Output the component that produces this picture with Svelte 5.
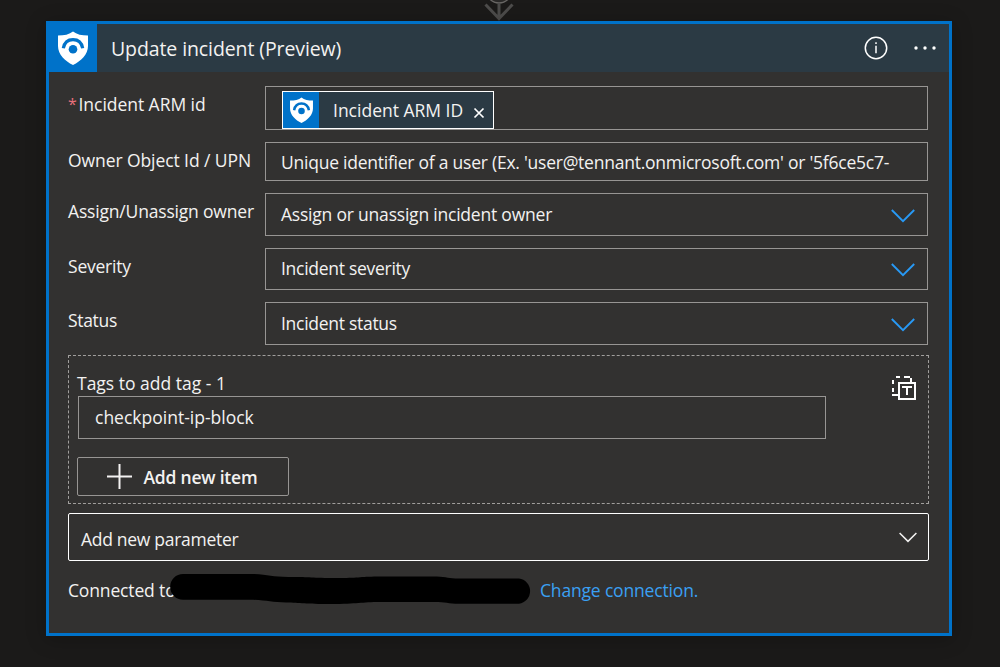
<script>
  const selects = [
    { label: 'Assign/Unassign owner', value: 'Assign or unassign incident owner', height: 43, gap: 12, ls: [-0.18, -0.21] },
    { label: 'Severity', value: 'Incident severity', height: 42, gap: 12, ls: [-0.22, -0.28] },
    { label: 'Status', value: 'Incident status', height: 43, gap: 10, ls: [-0.32, -0.28] }
  ];
</script>

{#snippet shield(w, h)}
  <svg width={w} height={h} viewBox="0 0 30 34">
    <path fill="#fff" d="M15 0.5C18.5 3.4 24 4.6 30 4.6V15C30 23.5 23 30 15 34C7 30 0 23.5 0 15V4.6C6 4.6 11.5 3.4 15 0.5Z" />
    <path fill="none" stroke="#0072c9" stroke-width="3.2" d="M5.3 17.2C6.5 11 10.3 8.6 15 8.6S23.500 11 24.700 17.200" />
    <circle cx="15" cy="18.300" r="4.300" fill="#0072c9" />
  </svg>
{/snippet}

<div class="canvas">
  <svg class="arrow" width="32" height="21" viewBox="0 0 32 21">
    <circle cx="16" cy="-10" r="13" fill="#292827" stroke="#686664" stroke-width="1.300" />
    <path d="M16 3V19M2.500 4.500L16 18.500L29.500 4.500" fill="none" stroke="#4d4c4b" stroke-width="3" />
  </svg>

  <section class="card">
    <header>
      <div class="logo">{@render shield(30, 34)}</div>
      <h1>Update incident (Preview)</h1>
      <svg class="info" width="24" height="24" viewBox="0 0 24 24">
        <circle cx="12" cy="12" r="10.700" fill="none" stroke="#fff" stroke-width="1.500" />
        <path d="M12 9.700V17.300M12 6.200V8" stroke="#fff" stroke-width="1.500" />
      </svg>
      <svg class="more" width="24" height="6" viewBox="0 0 24 6" fill="#fff">
        <circle cx="3" cy="3" r="1.700" /><circle cx="12" cy="3" r="1.700" /><circle cx="21" cy="3" r="1.700" />
      </svg>
    </header>

    <div class="body">
      <div class="row first">
        <div class="label req"><span class="star">*</span><span class="t-arm">Incident ARM id</span></div>
        <div class="field token-field">
          <div class="token">
            <div class="token-logo">{@render shield(23, 26)}</div>
            <span class="t-token">Incident ARM ID</span>
            <svg class="close" width="12" height="12" viewBox="0 0 12 12"><path d="M1.500 1.500L10.500 10.500M10.500 1.500L1.500 10.500" stroke="#fff" stroke-width="1.700" /></svg>
          </div>
        </div>
      </div>
      <div class="row second">
        <div class="label t-owner">Owner Object Id / UPN</div>
        <div class="field"><span class="t-unique">Unique identifier of a user (Ex. 'user@tennant.onmicrosoft.com' or '5f6ce5c7-</span></div>
      </div>
      {#each selects as s}
        <div class="row" style="height:{s.height}px;margin-bottom:{s.gap}px">
          <div class="label" style="letter-spacing:{s.ls[0]}px">{s.label}</div>
          <div class="field select">
            <span style="letter-spacing:{s.ls[1]}px">{s.value}</span>
            <svg class="chev" width="24" height="14" viewBox="0 0 24 14"><path d="M0.800 1L12 12.200L23.200 1" fill="none" stroke="#2899f5" stroke-width="1.900" /></svg>
          </div>
        </div>
      {/each}

      <div class="tags">
        <div class="tags-head">
          <span class="t-tags">Tags to add tag - 1</span>
          <svg width="24" height="24" viewBox="0 0 24 24" fill="none" stroke="#fff" stroke-width="2">
            <path d="M4 1H8M12 1H18M19 2V6M1 4V8M1 12V16M1 18V20M2 19H6" />
            <rect x="7" y="7" width="16" height="16" />
            <path d="M10 11H20M15 11V19" />
          </svg>
        </div>
        <div class="tag-input"><span class="t-check">checkpoint-ip-block</span></div>
        <button class="add">
          <svg width="25" height="25" viewBox="0 0 25 25"><path d="M0 12.500H25M12.500 0V25" stroke="#f3f2f1" stroke-width="2" /></svg>
          <span class="t-add">Add new item</span>
        </button>
      </div>

      <div class="param">
        <span class="t-param">Add new parameter</span>
        <svg width="18" height="11" viewBox="0 0 18 11"><path d="M0.600 1L9 9.400L17.400 1" fill="none" stroke="#f3f2f1" stroke-width="1.500" /></svg>
      </div>

      <footer>
        <span class="t-conn">Connected to</span>
        <svg class="mask" width="362" height="31" viewBox="0 0 361 31" preserveAspectRatio="none">
          <path d="M13 0H83C98 0.500 102 3 118 3C138 2.500 140 4 170 4C188 4 191 2.500 210 2.500H266C276 3 278 4.500 288 4.500H348A12.700 12.700 0 0 1 348 29.700H288C278 29.700 274 28 264 28H210C190 28 188 30 160 30C135 30 130 29 116 28.500C101 28.500 96 26 80 25.700H13A12.800 12.800 0 0 1 13 0Z" />
        </svg>
        <a class="t-change" href="#top">Change connection.</a>
      </footer>
    </div>
  </section>
</div>

<style>
  :global(body) { background: #1b1a19; overflow: hidden; }
  .canvas {
    position: relative;
    box-sizing: border-box;
    width: 1000px;
    height: 667px;
    padding: 21px 48px 0 46px;
    overflow: hidden;
    background: #1b1a19;
    color: #f3f2f1;
    font-family: "Open Sans", "Noto Sans", sans-serif;
    font-size: 17.500px;
    line-height: 24px;
    white-space: nowrap;
  }
  svg { display: block; flex: none; }
  .arrow { position: absolute; left: 483px; top: 0; }
  .card {
    position: relative;
    box-sizing: border-box;
    width: 906px;
    height: 615px;
    border: 3px solid #0072c9;
    background: #323130;
    box-shadow: 0 3px 18px rgba(0, 0, 0, 0.25);
  }
  header { display: flex; align-items: center; height: 48px; background: #2b3a44; }
  .logo { display: flex; align-items: center; justify-content: center; width: 48px; height: 48px; background: #0072c9; }
  h1 { flex: 1; margin: 2px 0 0 14px; font-size: 19.500px; font-weight: 400; letter-spacing: -0.100px; }
  .info { margin: 0 25px 1px 0; }
  .more { margin-right: 12px; }
  .body { padding: 14px 20px 0 19px; }
  .row { display: flex; width: 860px; }
  .first { height: 44px; margin-bottom: 12px; }
  .second { height: 39px; margin-bottom: 12px; }
  .label { width: 197px; flex: none; padding-top: 6px; box-sizing: border-box; }
  .req { display: flex; }
  .star { width: 10.500px; color: #e8707b; font-size: 16px; }
  .t-arm { letter-spacing: -0.040px; }
  .t-owner { letter-spacing: -0.080px; }
  .t-unique { letter-spacing: -0.240px; }
  .t-add { letter-spacing: -0.220px; }
  .t-param { letter-spacing: -0.290px; }
  .t-change { letter-spacing: -0.170px; }
  .field {
    flex: 1;
    box-sizing: border-box;
    display: flex;
    align-items: center;
    justify-content: space-between;
    border: 1px solid #979593;
    padding: 0 12px 0 15px;
    min-width: 0;
  }
  .select span { margin-bottom: 2px; }
  .chev { margin-top: 2px; }
  .token-field { padding: 0 0 0 16px; }
  .token {
    box-sizing: border-box;
    display: flex;
    align-items: center;
    width: 212px;
    height: 38px;
    margin-top: 4px;
    border: 1px solid #fff;
    background: #2b3a44;
  }
  .token-logo { display: flex; align-items: center; justify-content: center; width: 36px; height: 36px; background: #0072c9; }
  .token span { width: 140px; margin-left: 14px; }
  .close { margin-top: 6px; }
  .tags {
    box-sizing: border-box;
    width: 861px;
    height: 149px;
    border: 1px dashed #a19f9d;
    padding: 15px 12px 0 8px;
  }
  .tags-head { display: flex; justify-content: space-between; height: 25px; }
  .tags-head svg { margin-top: 5px; }
  .tag-input {
    box-sizing: border-box;
    display: flex;
    align-items: center;
    width: 748px;
    height: 43px;
    margin-left: 1px;
    padding: 0 0 2px 16px;
    border: 1px solid #979593;
  }
  .add {
    box-sizing: border-box;
    display: flex;
    align-items: center;
    width: 212px;
    height: 39px;
    margin: 18px 0 0;
    padding: 0 0 0 29px;
    gap: 11.500px;
    border: 1px solid #979593;
    border-radius: 2px;
    background: none;
    color: inherit;
    font: inherit;
    font-weight: 600;
  }
  .param {
    box-sizing: border-box;
    display: flex;
    align-items: center;
    justify-content: space-between;
    width: 861px;
    height: 48px;
    margin-top: 9px;
    padding: 4px 11px 0 12px;
    border: 1px solid #fff;
    border-radius: 2px;
  }
  .param svg { margin-bottom: 4px; }
  footer { position: relative; display: flex; margin-top: 17px; }
  .t-conn { width: 472px; letter-spacing: -0.150px; }
  .mask { position: absolute; left: 102px; top: -4px; }
  a { color: #3aa0f3; text-decoration: none; }
</style>
